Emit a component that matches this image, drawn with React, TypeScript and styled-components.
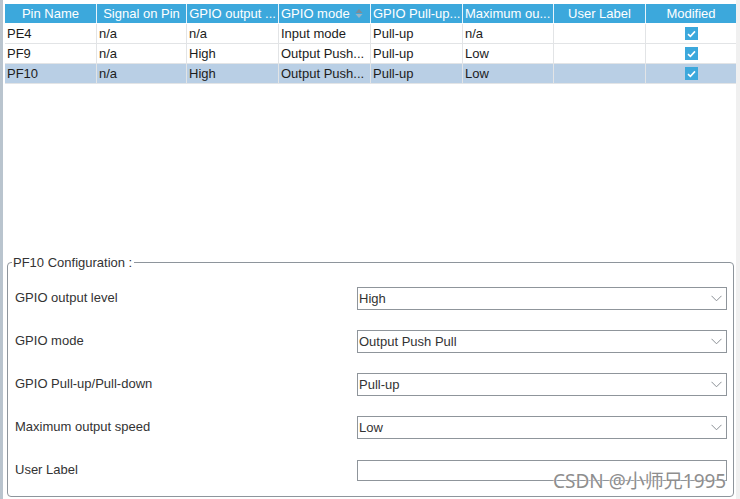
import React from "react";
import styled, { createGlobalStyle } from "styled-components";

const Global = createGlobalStyle`
  html, body { margin: 0; padding: 0; background: #fff; }
  body { font-family: "Liberation Sans", Arial, sans-serif; font-size: 13px; }
`;

const COLS = "92px 90px 92px 92px 92px 91px 92px 90px";

const Frame = styled.div`
  position: relative;
  width: 740px;
  height: 499px;
  display: flex;
  overflow: hidden;
  background: #fff;
`;

const LeftStrip = styled.div`
  width: 3px;
  background: #b9c4ce;
  flex: none;
`;

const RightStrip = styled.div`
  width: 4px;
  background: #f0f0f0;
  flex: none;
`;

const Main = styled.div`
  flex: 1;
  display: flex;
  flex-direction: column;
  justify-content: space-between;
  padding: 4px 0 2px 2px;
  min-width: 0;
`;

const Table = styled.div`
  display: flex;
  flex-direction: column;
`;

const Row = styled.div<{ $selected?: boolean }>`
  display: grid;
  grid-template-columns: ${COLS};
  height: 19px;
  background: ${(p) => (p.$selected ? "#b9cfe5" : "#fff")};
  border-bottom: 1px solid #e2e4e6;
`;

const HeaderRow = styled.div`
  display: grid;
  grid-template-columns: ${COLS};
  height: 19px;
  background: #3ca8dc;
  border-bottom: 1px solid #fff;
`;

const HeadCell = styled.div<{ $align?: string }>`
  display: flex;
  align-items: center;
  justify-content: ${(p) => p.$align || "center"};
  color: #fff;
  font-size: 13px;
  padding: 0 2px;
  border-right: 1px solid #e8f4fb;
  white-space: nowrap;
  overflow: hidden;
  &:last-child { border-right: none; }
`;

const HeadText = styled.span`
  white-space: nowrap;
  overflow: hidden;
  flex: 0 1 auto;
  min-width: 0;
`;

const Cell = styled.div<{ $center?: boolean }>`
  display: flex;
  align-items: center;
  justify-content: ${(p) => (p.$center ? "center" : "flex-start")};
  color: #1c1c1c;
  font-size: 13px;
  padding: 0 2px;
  border-right: 1px solid #e2e4e6;
  white-space: nowrap;
  overflow: hidden;
  &:last-child { border-right: none; }
`;

const Check = styled.span`
  width: 13px;
  height: 13px;
  background: #3ca8dc;
  display: flex;
  align-items: center;
  justify-content: center;
`;

const Fieldset = styled.fieldset`
  margin: 0 2px 0 2px;
  border: 1px solid #8e959c;
  border-radius: 4px;
  padding: 17px 6px 14px 7px;
  display: grid;
  grid-template-columns: 1fr 370px;
  row-gap: 20px;
  align-items: center;
`;

const Legend = styled.legend`
  font-size: 13px;
  line-height: 15px;
  color: #333;
  padding: 0 2px 0 1px;
  margin-left: -3px;
`;

const Label = styled.div`
  font-size: 13px;
  color: #333;
  height: 23px;
  line-height: 21px;
`;

const Select = styled.div`
  height: 21px;
  border: 1px solid #8f959b;
  display: flex;
  align-items: center;
  justify-content: space-between;
  padding: 0 4px 0 1px;
  font-size: 13px;
  color: #333;
  background: #fff;
`;

const TextBox = styled.div`
  height: 19px;
  border: 1px solid #8f959b;
  background: #fff;
`;

const Watermark = styled.div`
  position: absolute;
  left: 553px;
  top: 466px;
  font-family: "Noto Sans", "Noto Sans CJK SC", sans-serif;
  font-size: 19px;
  color: #8e8e8e;
  white-space: nowrap;
  text-shadow: 0 0 2px #fff, 0 0 1px #fff;
`;

const CheckIcon = () => (
  <Check>
    <svg width="9" height="8" viewBox="0 0 9 8">
      <path d="M1 4.2 L3.4 6.4 L8 1.4" stroke="#fff" strokeWidth="1.6" fill="none" />
    </svg>
  </Check>
);

const SortIcon = () => (
  <svg width="8" height="11" viewBox="0 0 8 11" style={{ flex: "none", marginRight: 5 }}>
    <path d="M0.5 5 L4 1 L7.5 5 Z" fill="#7d8c98" />
    <path d="M0.5 6 L4 10 L7.5 6 Z" fill="#9bb4c4" />
  </svg>
);

const Chevron = () => (
  <svg width="11" height="7" viewBox="0 0 11 7">
    <path d="M0.5 0.8 L5.5 5.8 L10.5 0.8" stroke="#8a8f95" strokeWidth="1" fill="none" />
  </svg>
);

const rows = [
  ["PE4", "n/a", "n/a", "Input mode", "Pull-up", "n/a", ""],
  ["PF9", "n/a", "High", "Output Push...", "Pull-up", "Low", ""],
  ["PF10", "n/a", "High", "Output Push...", "Pull-up", "Low", ""],
];

const fields: { label: string; value?: string }[] = [
  { label: "GPIO output level", value: "High" },
  { label: "GPIO mode", value: "Output Push Pull" },
  { label: "GPIO Pull-up/Pull-down", value: "Pull-up" },
  { label: "Maximum output speed", value: "Low" },
  { label: "User Label" },
];

export default function App() {
  return (
    <>
      <Global />
      <Frame>
        <LeftStrip />
        <Main>
          <Table>
            <HeaderRow>
              <HeadCell><HeadText>Pin Name</HeadText></HeadCell>
              <HeadCell><HeadText>Signal on Pin</HeadText></HeadCell>
              <HeadCell><HeadText>GPIO output ...</HeadText></HeadCell>
              <HeadCell $align="space-between"><HeadText>GPIO mode</HeadText><SortIcon /></HeadCell>
              <HeadCell $align="flex-start"><HeadText>GPIO Pull-up...</HeadText></HeadCell>
              <HeadCell $align="flex-start"><HeadText>Maximum ou...</HeadText></HeadCell>
              <HeadCell><HeadText>User Label</HeadText></HeadCell>
              <HeadCell><HeadText>Modified</HeadText></HeadCell>
            </HeaderRow>
            {rows.map((r, i) => (
              <Row key={r[0]} $selected={i === 2}>
                {r.map((c, j) => (
                  <Cell key={j}>{c}</Cell>
                ))}
                <Cell $center><CheckIcon /></Cell>
              </Row>
            ))}
          </Table>
          <Fieldset>
            <Legend>PF10 Configuration :</Legend>
            {fields.map((f) => (
              <React.Fragment key={f.label}>
                <Label>{f.label}</Label>
                {f.value !== undefined ? (
                  <Select>
                    <span>{f.value}</span>
                    <Chevron />
                  </Select>
                ) : (
                  <TextBox />
                )}
              </React.Fragment>
            ))}
          </Fieldset>
        </Main>
        <RightStrip />
        <Watermark>CSDN @小师兄1995</Watermark>
      </Frame>
    </>
  );
}
